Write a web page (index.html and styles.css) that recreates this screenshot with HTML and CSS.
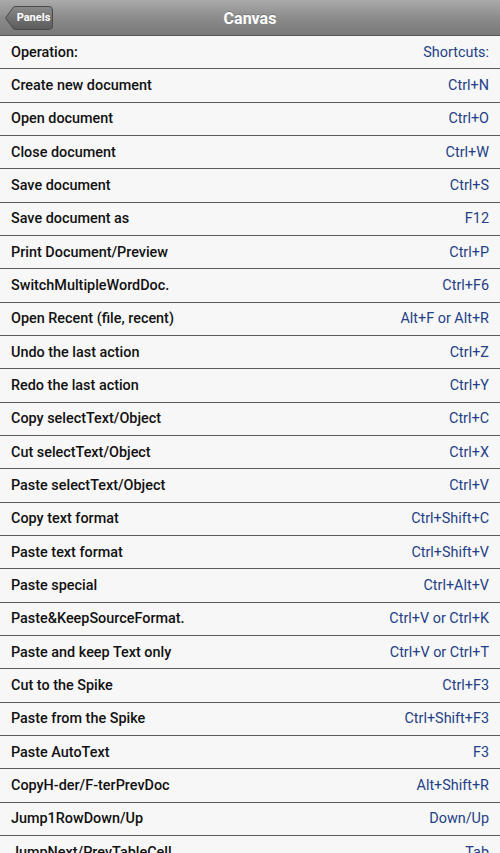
FILE: index.html
```html
<!DOCTYPE html>
<html>
<head>
<meta charset="utf-8">
<link rel="stylesheet" href="styles.css">
</head>
<body>
<div class="header">
  <div class="back"><svg class="back-shape" width="48" height="24" viewBox="0 0 48 24"><defs><linearGradient id="bg" x1="0" y1="0" x2="0" y2="1"><stop offset="0" stop-color="#8a8a8a"/><stop offset="1" stop-color="#5a5a5a"/></linearGradient></defs><path d="M0.5 12 L8.5 1 Q9 0.5 10 0.5 L44 0.5 Q47.5 0.5 47.5 4 L47.5 20 Q47.5 23.5 44 23.5 L10 23.5 Q9 23.5 8.5 23 Z" fill="url(#bg)" stroke="#4a4a4a" stroke-width="1"/></svg><span class="back-label">Panels</span></div>
  <div class="title">Canvas</div>
</div>
<div class="list">
  <div class="row"><span class="op">Operation:</span><span class="sc">Shortcuts:</span></div>
  <div class="row"><span class="op">Create new document</span><span class="sc">Ctrl+N</span></div>
  <div class="row"><span class="op">Open document</span><span class="sc">Ctrl+O</span></div>
  <div class="row"><span class="op">Close document</span><span class="sc">Ctrl+W</span></div>
  <div class="row"><span class="op">Save document</span><span class="sc">Ctrl+S</span></div>
  <div class="row"><span class="op">Save document as</span><span class="sc">F12</span></div>
  <div class="row"><span class="op">Print Document/Preview</span><span class="sc">Ctrl+P</span></div>
  <div class="row"><span class="op">SwitchMultipleWordDoc.</span><span class="sc">Ctrl+F6</span></div>
  <div class="row"><span class="op">Open Recent (file, recent)</span><span class="sc">Alt+F or Alt+R</span></div>
  <div class="row"><span class="op">Undo the last action</span><span class="sc">Ctrl+Z</span></div>
  <div class="row"><span class="op">Redo the last action</span><span class="sc">Ctrl+Y</span></div>
  <div class="row"><span class="op">Copy selectText/Object</span><span class="sc">Ctrl+C</span></div>
  <div class="row"><span class="op">Cut selectText/Object</span><span class="sc">Ctrl+X</span></div>
  <div class="row"><span class="op">Paste selectText/Object</span><span class="sc">Ctrl+V</span></div>
  <div class="row"><span class="op">Copy text format</span><span class="sc">Ctrl+Shift+C</span></div>
  <div class="row"><span class="op">Paste text format</span><span class="sc">Ctrl+Shift+V</span></div>
  <div class="row"><span class="op">Paste special</span><span class="sc">Ctrl+Alt+V</span></div>
  <div class="row"><span class="op">Paste&amp;KeepSourceFormat.</span><span class="sc">Ctrl+V or Ctrl+K</span></div>
  <div class="row"><span class="op">Paste and keep Text only</span><span class="sc">Ctrl+V or Ctrl+T</span></div>
  <div class="row"><span class="op">Cut to the Spike</span><span class="sc">Ctrl+F3</span></div>
  <div class="row"><span class="op">Paste from the Spike</span><span class="sc">Ctrl+Shift+F3</span></div>
  <div class="row"><span class="op">Paste AutoText</span><span class="sc">F3</span></div>
  <div class="row"><span class="op">CopyH-der/F-terPrevDoc</span><span class="sc">Alt+Shift+R</span></div>
  <div class="row"><span class="op">Jump1RowDown/Up</span><span class="sc">Down/Up</span></div>
  <div class="row"><span class="op">JumpNext/PrevTableCell</span><span class="sc">Tab</span></div>
</div>
</body>
</html>
```
FILE: styles.css
```css
html, body {
  margin: 0;
  padding: 0;
  background: #f7f7f7;
  font-family: Roboto, "Noto Sans", sans-serif;
  overflow: hidden;
}
.header {
  position: relative;
  height: 35px;
  background: linear-gradient(#aaaaaa, #8c8c8c 50%, #787878);
  border-bottom: 1px solid #555;
  display: flex;
  align-items: center;
  justify-content: center;
}
.back {
  position: absolute;
  left: 5px;
  top: 6px;
  width: 48px;
  height: 24px;
}
.back-shape {
  display: block;
}
.back-label {
  position: absolute;
  left: 9px;
  right: 0;
  top: 0;
  height: 24px;
  line-height: 24px;
  text-align: center;
  color: #fff;
  font-size: 11px;
  font-weight: 700;
}
.title {
  color: #fff;
  font-size: 16px;
  font-weight: 700;
  padding-top: 1px;
  text-shadow: 0 -1px 0 rgba(0,0,0,0.2);
}
.list {
  display: flex;
  flex-direction: column;
}
.row {
  height: 32.333px;
  border-bottom: 1px solid #5a5a5a;
  display: flex;
  align-items: center;
  justify-content: space-between;
  padding: 0 11px 0 11px;
  font-size: 14.4px;
  flex-shrink: 0;
}
.op {
  color: #111;
  font-weight: 500;
}
.sc {
  color: #233f86;
}
```
